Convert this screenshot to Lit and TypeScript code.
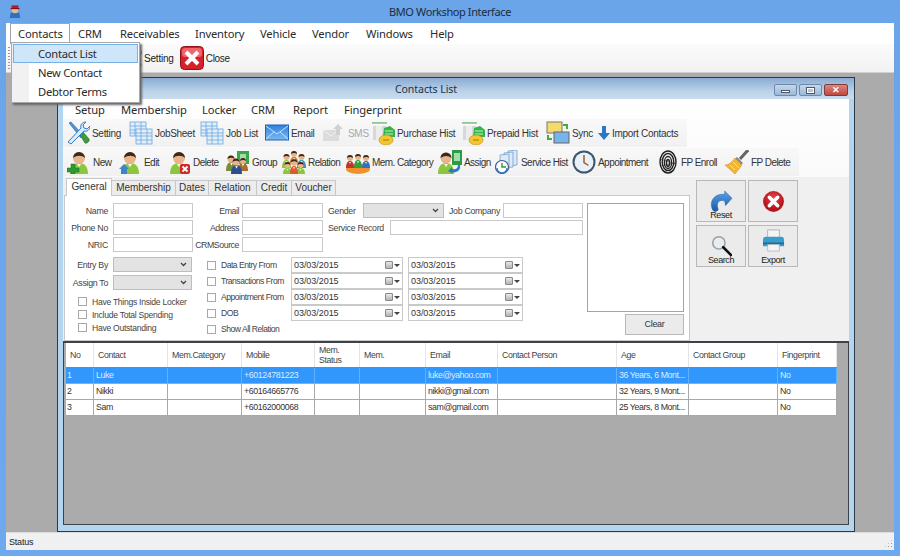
import { LitElement, html, css, svg } from "lit";
import { customElement } from "lit/decorators.js";

const head = (x: number, y: number, r: number, hair = "#3a2a1c") => svg`
  <circle cx=${x} cy=${y} r=${r} fill="#e9b48c"/>
  <path d="M${x - r} ${y}a${r} ${r} 0 0 1 ${2 * r} 0c-${r * 0.5} -${r * 0.5} -${r * 1.4} -${r * 0.5} -${2 * r} 0z" fill=${hair}/>`;
const body = (x: number, y: number, w: number, h: number, c = "#8cc63f") => svg`
  <path d="M${x} ${y + h}c0 -${h * 0.7} ${w * 0.2} -${h} ${w / 2} -${h}s${w / 2} ${h * 0.3} ${w / 2} ${h}z" fill=${c}/>
  <path d="M${x + w * 0.38} ${y + 1}l${w * 0.12} ${h * 0.3}l${w * 0.12} -${h * 0.3}z" fill="#f4f4e0"/>`;
const person = svg`${body(3, 13, 18, 11)}${head(12, 8, 6)}`;

const ICONS: Record<string, unknown> = {
  logo: svg`<path d="M2 16h12l-1-6H3z" fill="#2f6fc4"/><circle cx="8" cy="7" r="3.5" fill="#eeb98f"/><path d="M4 5V1.500h8V5z" fill="#b71c24"/><rect x="3" y="4.500" width="10" height="1.300" fill="#7a1016"/>`,
  close: svg`<rect x=".5" y=".5" width="23" height="23" rx="4" fill="#d8202a" stroke="#8e1118"/><rect x="2" y="2" width="20" height="9" rx="3" fill="#f0656b"/><path d="M6 6l12 12M18 6L6 18" stroke="#fff" stroke-width="4"/>`,
  setting: svg`<path d="M3 2l2-1 12 13-2 3z" fill="#4d94d8" stroke="#2369a8" stroke-width=".6"/><path d="M14 14l3-3 6 7c1 2-2 5-4 4z" fill="#3f9a3c" stroke="#1f6a22" stroke-width=".6"/><path d="M2 21L15 7c-1-3 1-6 5-6l-3 3 1 3 3 1 3-3c0 4-3 6-6 5L5 23z" fill="#dbeafa" stroke="#2f7dc8"/>`,
  grid: svg`<g fill="#e2effb" stroke="#6da7e0" stroke-width=".8"><rect x="1" y="1" width="16" height="14"/><rect x="7" y="8" width="16" height="15"/><path d="M1 5h16M1 9h6M1 12h6M6 1v14M12 1v7M7 12h16M7 15h16M7 19h16M12 8v15M18 8v15" fill="none"/></g>`,
  email: svg`<defs><linearGradient id="em" x2="0" y2="1"><stop offset="0" stop-color="#2c82e0"/><stop offset="1" stop-color="#7dbaf0"/></linearGradient></defs><rect x=".5" y="4" width="23" height="15" fill="url(#em)" stroke="#1f63b4"/><path d="M1 5l11 8 11-8M1 18l8-7M23 18l-8-7" fill="none" stroke="#c9e3fa"/>`,
  sms: svg`<path d="M1 9h16v11H1z" fill="#dcdcdc"/><path d="M1 9l8 6 8-6" stroke="#f2f2f2" fill="none"/><path d="M16 3l5 5h-3v6h-4V8h-3z" fill="#d0d0d0"/>`,
  hist: svg`<rect x="1" y="1" width="15" height="1.800" fill="#8fc79a"/><rect x="2" y="5" width="13" height="14" fill="#d8d8d8"/><rect x="5" y="5" width="6" height="14" fill="#ececec"/><path d="M13 7l6-2 5 4v7H12z" fill="#35b34a"/><path d="M14 10h8M14 13h8" stroke="#bff0c4"/><ellipse cx="15" cy="19" rx="7" ry="5" fill="#f3c52e" stroke="#b98d10" stroke-width=".6"/><path d="M12 19h6" stroke="#a8780a"/>`,
  sync: svg`<rect x="1" y="1" width="15" height="11" fill="#f5dc6a" stroke="#777"/><rect x="8" y="11" width="15" height="11" fill="#78b4ec" stroke="#666"/><path d="M17 4h4v4M6 18H2v-4" fill="none" stroke="#3fae3c" stroke-width="2"/>`,
  imp: svg`<path d="M4 0h4v7h4l-6 7-6-7h4z" fill="#2a78c8"/>`,
  new: svg`${person}<path d="M0 18h4v-4h4v4h4v4H8v2H4v-2H0z" fill="#2f9a2f" stroke="#1c6c1c" stroke-width=".5"/>`,
  edit: svg`${person}<path d="M1 19l5-5 5 5H9v5H3v-5z" fill="#3c86c8"/>`,
  del: svg`${person}<rect x="13" y="14" width="10" height="10" rx="2" fill="#cf2a2a"/><path d="M15.500 16.500l5 5M20.500 16.500l-5 5" stroke="#fff" stroke-width="1.800"/>`,
  group: svg`<rect x="11" y="1" width="12" height="13" fill="#3aa84a"/><rect x="14" y="4" width="6" height="7" fill="#9fe0a6"/>${body(0, 12, 11, 9, "#7a8c3a")}${head(5, 9, 3.500)}${body(12, 13, 10, 8, "#a86c30")}${head(17, 11, 3)}${body(5, 15, 11, 9, "#2d4f8c")}${head(10, 12, 3.500)}`,
  relation: svg`${body(0, 10, 9, 8)}${head(4.500, 7, 3)}${body(15, 10, 9, 8, "#3b8fb0")}${head(19.500, 7, 3)}${body(8, 7, 8, 6, "#c87830")}${head(12, 4, 3)}${body(1, 18, 9, 6, "#8cc63f")}${head(5.500, 15, 3)}${body(14, 18, 9, 6, "#8cc63f")}${head(18.500, 15, 3)}${body(8, 16, 8, 8, "#d85c30")}${head(12, 12.500, 3.300)}`,
  mem: svg`<ellipse cx="12" cy="19" rx="12" ry="5" fill="#f0902a"/>${body(0, 11, 8, 7, "#c83030")}${head(4, 8, 3)}${body(8, 10, 8, 8, "#3a9c3a")}${head(12, 7, 3)}${body(16, 11, 8, 7, "#2f6fc4")}${head(20, 8, 3)}`,
  assign: svg`<rect x="14" y="0" width="10" height="15" fill="#2f9a4a"/><rect x="16" y="3" width="6" height="8" fill="#9fe0a6"/>${body(0, 13, 16, 11)}${head(8, 8, 5.500)}<path d="M22 15c1 6-4 8-8 7l1 2-5-3 4-4v2c3 1 6 0 6-4z" fill="#2a78c8"/>`,
  service: svg`<g fill="#dbe9f8" stroke="#6a94c8" stroke-width=".7"><path d="M13 1l9-1v15l-9 1z"/><path d="M9 3l9-1v15l-9 1z"/><path d="M5 5l9-1v15l-9 1z"/></g><circle cx="7" cy="17" r="6.500" fill="#fff" stroke="#3c5f88" stroke-width="1.200"/><path d="M7 13v4h4" stroke="#2e9a3c" stroke-width="1.400" fill="none"/><path d="M2 18a5 5 0 0 0 10 0" stroke="#2a78c8" stroke-width="1.400" fill="none"/>`,
  clock: svg`<circle cx="12" cy="12" r="11.500" fill="#3d5568"/><circle cx="12" cy="12" r="9.500" fill="#e8f1fa"/><path d="M12 5v7.500l4.500 3" stroke="#a85a18" stroke-width="1.500" fill="none"/>`,
  finger: svg`<g fill="none" stroke="#222" stroke-width="1.400"><ellipse cx="9" cy="12" rx="8" ry="11"/><ellipse cx="9" cy="12" rx="5.800" ry="8.500"/><ellipse cx="9" cy="12.500" rx="3.600" ry="6"/><ellipse cx="9" cy="13" rx="1.500" ry="3.500"/><path d="M1 9l16 5M1 16l16-3" stroke-width=".5"/></g>`,
  broom: svg`<path d="M15 9L23 0" stroke="#666" stroke-width="3"/><path d="M12 7l6 6-2 2-6-6z" fill="#8a8a8a"/><path d="M10 8l7 7-7 9-10-9c4 0 7-3 10-7z" fill="#f2b632" stroke="#c68a14" stroke-width=".5"/><path d="M5 15l5 5M8 12l6 6" stroke="#fbe39a"/>`,
  reset: svg`<defs><linearGradient id="rs" x2="0" y2="1"><stop offset="0" stop-color="#5aa5ea"/><stop offset="1" stop-color="#1a58a8"/></linearGradient></defs><path d="M3 22C-2 12 6 3 16 5l0-4 8 8-7 8-1-5C10 10 6 14 9 21 8 24 5 24 3 22z" fill="url(#rs)" stroke="#1c5496" stroke-width=".5"/>`,
  cancel: svg`<defs><radialGradient id="cc" cy=".35"><stop offset="0" stop-color="#f0484c"/><stop offset="1" stop-color="#b4141c"/></radialGradient></defs><circle cx="12" cy="12" r="10" fill="url(#cc)"/><path d="M8 8l8 8M16 8l-8 8" stroke="#fff" stroke-width="3.400" stroke-linecap="round"/>`,
  search: svg`<circle cx="9" cy="9" r="7" fill="#e8ecef" stroke="#9aa2a8" stroke-width="1.800"/><path d="M14 14l9 9" stroke="#111" stroke-width="3" stroke-linecap="round"/>`,
  print: svg`<rect x="6" y="1" width="12" height="8" fill="#f4f4f4" stroke="#999" stroke-width=".7"/><path d="M1 12c0-3 1-4 3-4h16c2 0 3 1 3 4v6H1z" fill="#3c9ccc"/><rect x="1" y="14" width="22" height="2" fill="#1f6f9c"/><rect x="6" y="16" width="12" height="7" fill="#f4f4f4" stroke="#aaa" stroke-width=".7"/>`,
};

const icon = (n: string, w = 24, h = 24, vb = "0 0 24 24") =>
  html`<svg class="ic" width=${w} height=${h} viewBox=${vb}>${ICONS[n]}</svg>`;

const MENU = [["Contacts", 60], ["CRM", 42], ["Receivables", 75], ["Inventory", 65], ["Vehicle", 52], ["Vendor", 54], ["Windows", 64], ["Help", 40]] as const;
const SUBMENU = [["Setup", 46], ["Membership", 81], ["Locker", 49], ["CRM", 42], ["Report", 51], ["Fingerprint", 70]] as const;
const ROW1 = [["setting", "Setting", 63], ["grid", "JobSheet", 71], ["grid", "Job List", 65], ["email", "Email", 57], ["sms", "SMS", 49], ["hist", "Purchase Hist", 90], ["hist", "Prepaid Hist", 85], ["sync", "Sync", 52], ["imp", "Import Contacts", 86]] as const;
const ROW2 = [["new", "New", 51], ["edit", "Edit", 49], ["del", "Delete", 59], ["group", "Group", 56], ["relation", "Relation", 64], ["mem", "Mem. Category", 92], ["assign", "Assign", 57], ["service", "Service Hist", 77], ["clock", "Appointment", 87], ["finger", "FP Enroll", 66], ["broom", "FP Delete", 70]] as const;
const TABS = [["General", 46], ["Membership", 64], ["Dates", 33], ["Relation", 48], ["Credit", 35], ["Voucher", 44]] as const;
const COLS = [28, 74, 74, 73, 45, 66, 72, 119, 72, 89, 59];
const HEAD = ["No", "Contact", "Mem.Category", "Mobile", "Mem.\nStatus", "Mem.", "Email", "Contact Person", "Age", "Contact Group", "Fingerprint"];
const DATA = [
  ["1", "Luke", "", "+60124781223", "", "", "luke@yahoo.com", "", "36 Years, 6 Mont...", "", "No"],
  ["2", "Nikki", "", "+60164665776", "", "", "nikki@gmail.com", "", "32 Years, 9 Mont...", "", "No"],
  ["3", "Sam", "", "+60162000068", "", "", "sam@gmail.com", "", "25 Years, 8 Mont...", "", "No"],
];
const TEMPLATE = COLS.map((c) => `${c}px`).join(" ");

@customElement("app-root")
export class AppRoot extends LitElement {
  static styles = css`
    :host { display: block; width: 900px; height: 556px; overflow: hidden; font-family: "Liberation Sans", Arial, sans-serif; color: #222; }
    * { box-sizing: border-box; }
    .ic { display: block; flex: none; }
    .main { width: 900px; height: 556px; background: linear-gradient(#6aa5ea, #6ea8ee); padding: 0 6px 6px; display: flex; flex-direction: column; position: relative; }
    .title { height: 23px; flex: none; display: flex; align-items: center; position: relative; }
    .logo { margin: 0 0 0 2px; }
    .title-text { position: absolute; left: 0; right: 0; text-align: center; font: 11px "Noto Sans", sans-serif; letter-spacing: -.4px; color: #1c2c3c; top: 4px; }
    .menubar { height: 21px; flex: none; background: #fff; display: flex; padding-left: 4px; font: 11.2px/19px "Noto Sans", sans-serif; letter-spacing: -.15px; color: #2a2a2a; }
    .mi { padding: 1px 0 0 8px; flex: none; }
    .mi.open { border: 1px solid #a4a4a4; border-bottom: none; padding: 0 0 0 7px; height: 21px; background: #fff; }
    .toolbar { height: 29px; flex: none; background: linear-gradient(#fbfbfb, #f2f2f2); border-bottom: 1px solid #d0d0d0; box-shadow: 0 1px 1px #8a8a8a; display: flex; align-items: center; font-size: 10px; position: relative; padding-left: 2px; }
    .tgrip { height: 24px; flex: none; margin-right: 108px; background-image: radial-gradient(#9a9a9a .8px, transparent .8px); background-size: 2px 3px; width: 2px; }
    .toolbar .t1 { margin: 0 6px 0 2px; letter-spacing: -.2px; }
    .toolbar .t2 { margin-left: 2px; letter-spacing: -.3px; }
    .mdi { flex: 1; background: #ababab; position: relative; min-height: 0; }
    .status { height: 18px; flex: none; background: #f0f0f0; border-top: 1px solid #dcdcdc; font-size: 9px; letter-spacing: -.2px; line-height: 18px; padding-left: 3px; position: relative; display: flex; justify-content: space-between; }
    .grip { width: 9px; height: 9px; margin: 6px 1px 0 0; background-image: radial-gradient(#9a9a9a 1px, transparent 1px); background-size: 3px 3px; clip-path: polygon(100% 0, 100% 100%, 0 100%); }

    .drop { position: absolute; left: 11px; top: 42px; width: 129px; height: 61px; background: linear-gradient(90deg, #f1f1f1 17px, #fff 17px); border: 1px solid #a8a8a8; box-shadow: 2px 2px 2px #666; padding: 1px; font: 11.2px/19px "Noto Sans", sans-serif; letter-spacing: -.25px; color: #2a2a2a; z-index: 5; }
    .di { height: 19px; padding-left: 24px; border: 1px solid transparent; line-height: 17px; }
    .di.on { background: #cfe5f9; border-color: #74b2e8; }

    .child { position: absolute; left: 51px; top: 4px; width: 798px; height: 455px; background: #b5d5ee; border: 1px solid #2c3a48; padding: 0 5px 6px; display: flex; flex-direction: column; }
    .ctitle { height: 21px; flex: none; margin: 0 -5px; padding: 6px 6px 0 5px; background: linear-gradient(#8aabd2, #b9d1e8 60%, #c8dcee); position: relative; display: flex; justify-content: flex-end; align-items: flex-start; gap: 2px; }
    .ctitle span { position: absolute; left: 0; right: 60px; top: 4px; text-align: center; font: 10.6px "Noto Sans", sans-serif; letter-spacing: -.1px; color: #1e3246; }
    .wb { width: 23px; height: 12px; border: 1px solid #6f8aa8; border-radius: 2px; background: linear-gradient(#c4d8ec, #9bb9d8); display: flex; align-items: center; justify-content: center; }
    .wb.x { background: linear-gradient(#e0857c, #bb4a40); border-color: #7d3e3a; width: 24px; color: #fff; font: bold 9px "Liberation Sans", sans-serif; }
    .wb i { display: block; }
    .wb i.mn { width: 9px; height: 3px; background: #fff; border: 1px solid #556; margin-top: 3px; }
    .wb i.mx { width: 9px; height: 7px; border: 2px solid #fff; outline: 1px solid #556; outline-offset: -1px; }
    .content { flex: 1; min-height: 0; background: #f0f0f0; display: flex; flex-direction: column; }
    .cbars { background: linear-gradient(#fff, #fafafa); flex: none; padding-bottom: 1px; }
    .cmenu { height: 20px; display: flex; padding-left: 4px; font: 11.2px/22px "Noto Sans", sans-serif; letter-spacing: -.1px; color: #2a2a2a; }
    .cmenu .m { padding-left: 8px; flex: none; }
    .bar { display: flex; align-items: center; font-size: 10px; letter-spacing: -.3px; color: #333; background: linear-gradient(#f8f8f8, #f1f1f1); width: fit-content; }
    .bar.r1 { height: 28px; padding: 0 3px; margin-bottom: 1px; }
    .bar.r2 { height: 28px; padding: 0 4px; letter-spacing: -.55px; }
    .ti { display: flex; align-items: center; gap: 2px; flex: none; white-space: nowrap; }
    .ti.off { color: #a8a8a8; }
    .ti.fp { gap: 4px; }
    .body { height: 164px; flex: none; display: flex; align-items: flex-start; padding-left: 1px; }
    .tabwrap { width: 626px; padding-top: 2px; }
    .tabs { display: flex; height: 16px; padding-left: 2px; font-size: 10px; letter-spacing: -.05px; color: #333; align-items: flex-end; }
    .tab { height: 15px; background: #ececec; border: 1px solid #c8c8c8; border-bottom: none; border-left: none; text-align: center; line-height: 14px; flex: none; }
    .tab.on { background: #fff; height: 18px; border-left: 1px solid #c8c8c8; margin-bottom: -1px; position: relative; z-index: 1; line-height: 16px; }
    .panel { height: 146px; background: #fff; border: 1px solid #c8c8c8; padding-top: 7px; display: flex; font-size: 8.8px; letter-spacing: -.3px; color: #444; }
    .left { width: 522px; flex: none; }
    .top { display: grid; grid-template-columns: 48px 80px 49px 81px 40px 81px 59px 80px; grid-auto-rows: 16px; row-gap: 1px; align-items: start; height: 54px; }
    .lab { text-align: right; padding-right: 5px; line-height: 16px; white-space: nowrap; }
    .lab.n { padding-right: 3px; letter-spacing: -.45px; }
    .lab.l { text-align: left; padding: 0 0 0 5px; }
    .box { height: 15px; border: 1px solid #c9c9c9; background: #fff; display: block; }
    .sel { height: 15px; border: 1px solid #bdbdbd; background: #e3e3e3; display: flex; justify-content: flex-end; align-items: center; padding-right: 4px; }
    .chev { width: 7px; height: 5px; }
    .svc { grid-column: 5 / span 4; display: flex; }
    .svc .lab { width: 67px; flex: none; }
    .svc .box { flex: 1; }
    .bottom { display: flex; }
    .colA { width: 142px; flex: none; }
    .entry { display: grid; grid-template-columns: 48px 79px; grid-auto-rows: 15px; row-gap: 3px; margin-bottom: 5px; }
    .chk { display: flex; align-items: center; gap: 5px; height: 13px; padding-left: 13px; white-space: nowrap; letter-spacing: -.28px; font-size: 8.6px; }
    .colB { display: grid; grid-template-columns: 84px 112px 115px; grid-auto-rows: 16px; }
    .colB .chk { padding-left: 0; height: 100%; letter-spacing: -.5px; }
    .cb { width: 9px; height: 9px; flex: none; border: 1px solid #a8a8a8; background: #fff; }
    .date { width: 112px; height: 16px; border: 1px solid #c9c9c9; background: #fff; display: flex; align-items: center; padding: 0 2px; font-size: 9px; letter-spacing: -.05px; color: #333; justify-content: space-between; }
    .date.second { width: 115px; margin-left: 5px; }
    .cal { display: flex; align-items: center; gap: 1px; }
    .cal b { display: block; width: 8px; height: 8px; background: linear-gradient(#e8e8e8, #b4b4b4); border: 1px solid #888; border-radius: 1px; }
    .cal u { display: block; border: 3px solid transparent; border-top: 3px solid #3c4450; border-bottom: none; width: 0; height: 0; }
    .photoCol { width: 97px; flex: none; display: flex; flex-direction: column; align-items: flex-end; gap: 2px; }
    .photo { width: 97px; height: 109px; border: 1px solid #a4a4a4; background: #fff; }
    .btn { background: #ebebeb; border: 1px solid #b8b8b8; }
    .clear { width: 59px; height: 21px; text-align: center; line-height: 19px; color: #333; font-size: 9px; }
    .side { display: grid; grid-template-columns: 50px 50px; grid-auto-rows: 42px; gap: 3px 2px; margin: 3px 0 0 6px; }
    .sb { display: flex; flex-direction: column; align-items: center; font-size: 9px; letter-spacing: -.4px; color: #222; position: relative; }
    .sb.a { padding-top: 9px; }
    .sb.c { padding-top: 8px; }
    .sb.s { padding-top: 9px; }
    .sb.e { padding-top: 3px; }
    .sb span { position: absolute; bottom: 1px; left: 0; right: 0; text-align: center; }
    .gridbox { flex: 1; min-height: 0; background: #ababab; border: 1px solid #3c4248; border-top-width: 2px; padding-left: 2px; font-size: 8.8px; letter-spacing: -.4px; color: #333; }
    .row { display: grid; width: fit-content; }
    .row > div { overflow: hidden; }
    .hd { height: 24px; background: #fff; }
    .hd > div { border-right: 1px solid #e4e4e4; padding: 0 0 0 4px; display: flex; align-items: center; line-height: 10px; color: #444; white-space: pre-line; }
    .dr { height: 16px; background: #fff; border-top: 1px solid #a8a8a8; }
    .dr > div { border-right: 1px solid #a8a8a8; padding-left: 2px; line-height: 15px; white-space: nowrap; }
    .dr > div:first-child { padding-left: 1px; }
    .dr.on { background: #3297fd; color: #dcecff; border-top-color: #3297fd; }
    .dr.on > div { border-right-color: #5fb0fd; }
    .dr.last { height: 17px; border-bottom: 1px solid #a8a8a8; }
  `;

  private dateCell(second = false) {
    return html`<div class="date ${second ? "second" : ""}">03/03/2015<span class="cal"><b></b><u></u></span></div>`;
  }
  private chev() {
    return html`<svg class="chev" viewBox="0 0 7 5"><path d="M1 1l2.500 2.500L6 1" fill="none" stroke="#444" stroke-width="1.300"/></svg>`;
  }

  render() {
    return html`
      <div class="main">
        <div class="title">
          <svg class="ic logo" width="14" height="15" viewBox="0 0 16 17">${ICONS.logo}</svg>
          <div class="title-text">BMO Workshop Interface</div>
        </div>
        <div class="menubar">
          ${MENU.map(([t, w], i) => html`<div class="mi ${i === 0 ? "open" : ""}" style="width:${w}px">${t}</div>`)}
        </div>
        <div class="toolbar">
          <div class="tgrip"></div>
          ${icon("setting")}
          <span class="t1">Setting</span>
          ${icon("close")}
          <span class="t2">Close</span>
        </div>
        <div class="mdi">
          <div class="child">
            <div class="ctitle">
              <span>Contacts List</span>
              <div class="wb"><i class="mn"></i></div>
              <div class="wb"><i class="mx"></i></div>
              <div class="wb x">✕</div>
            </div>
            <div class="content">
              <div class="cbars">
                <div class="cmenu">
                  ${SUBMENU.map(([t, w]) => html`<div class="m" style="width:${w}px">${t}</div>`)}
                </div>
                <div class="bar r1">
                  ${ROW1.map(([ic, t, w]) => html`<div class="ti ${t === "SMS" ? "off" : ""}" style="width:${w}px">
                    ${ic === "imp" ? icon(ic, 12, 14, "0 0 12 14") : icon(ic)}<span>${t}</span></div>`)}
                </div>
                <div class="bar r2">
                  ${ROW2.map(([ic, t, w]) => html`<div class="ti ${ic === "finger" ? "fp" : ""}" style="width:${w}px">
                    ${ic === "finger" ? icon(ic, 18, 24, "0 0 18 24") : icon(ic)}<span>${t}</span></div>`)}
                </div>
              </div>
              <div class="body">
                <div class="tabwrap">
                  <div class="tabs">
                    ${TABS.map(([t, w], i) => html`<div class="tab ${i === 0 ? "on" : ""}" style="width:${w}px">${t}</div>`)}
                  </div>
                  <div class="panel">
                    <div class="left">
                      <div class="top">
                        <div class="lab">Name</div><div class="box"></div>
                        <div class="lab n">Email</div><div class="box"></div>
                        <div class="lab l">Gender</div>
                        <div class="sel">${this.chev()}</div>
                        <div class="lab l">Job Company</div><div class="box"></div>

                        <div class="lab">Phone No</div><div class="box"></div>
                        <div class="lab n">Address</div><div class="box"></div>
                        <div class="svc"><div class="lab l">Service Record</div><div class="box"></div></div>

                        <div class="lab">NRIC</div><div class="box"></div>
                        <div class="lab n">CRMSource</div><div class="box"></div>
                      </div>
                      <div class="bottom">
                        <div class="colA">
                          <div class="entry">
                            <div class="lab">Entry By</div><div class="sel">${this.chev()}</div>
                            <div class="lab">Assign To</div><div class="sel">${this.chev()}</div>
                          </div>
                          ${["Have Things Inside Locker", "Include Total Spending", "Have Outstanding"].map(
                            (t) => html`<div class="chk"><div class="cb"></div>${t}</div>`)}
                        </div>
                        <div class="colB">
                          ${["Data Entry From", "Transactions From", "Appointment From", "DOB"].map(
                            (t) => html`<div class="chk"><div class="cb"></div>${t}</div>${this.dateCell()}${this.dateCell(true)}`)}
                          <div class="chk"><div class="cb"></div>Show All Relation</div>
                        </div>
                      </div>
                    </div>
                    <div class="photoCol">
                      <div class="photo"></div>
                      <div class="btn clear">Clear</div>
                    </div>
                  </div>
                </div>
                <div class="side">
                  <div class="btn sb a">${icon("reset", 24, 22)}<span>Reset</span></div>
                  <div class="btn sb c">${icon("cancel", 25, 25)}</div>
                  <div class="btn sb s">${icon("search", 21, 21)}<span>Search</span></div>
                  <div class="btn sb e">${icon("print", 23, 23)}<span>Export</span></div>
                </div>
              </div>
              <div class="gridbox">
                <div class="row hd" style="grid-template-columns:${TEMPLATE}">
                  ${HEAD.map((h) => html`<div>${h}</div>`)}
                </div>
                ${DATA.map((r, i) => html`<div class="row dr ${i === 0 ? "on" : ""} ${i === 2 ? "last" : ""}" style="grid-template-columns:${TEMPLATE}">
                  ${r.map((c) => html`<div>${c}</div>`)}
                </div>`)}
              </div>
            </div>
          </div>
        </div>
        <div class="status">Status<div class="grip"></div></div>
        <div class="drop">
          <div class="di on">Contact List</div>
          <div class="di">New Contact</div>
          <div class="di">Debtor Terms</div>
        </div>
      </div>
    `;
  }
}
